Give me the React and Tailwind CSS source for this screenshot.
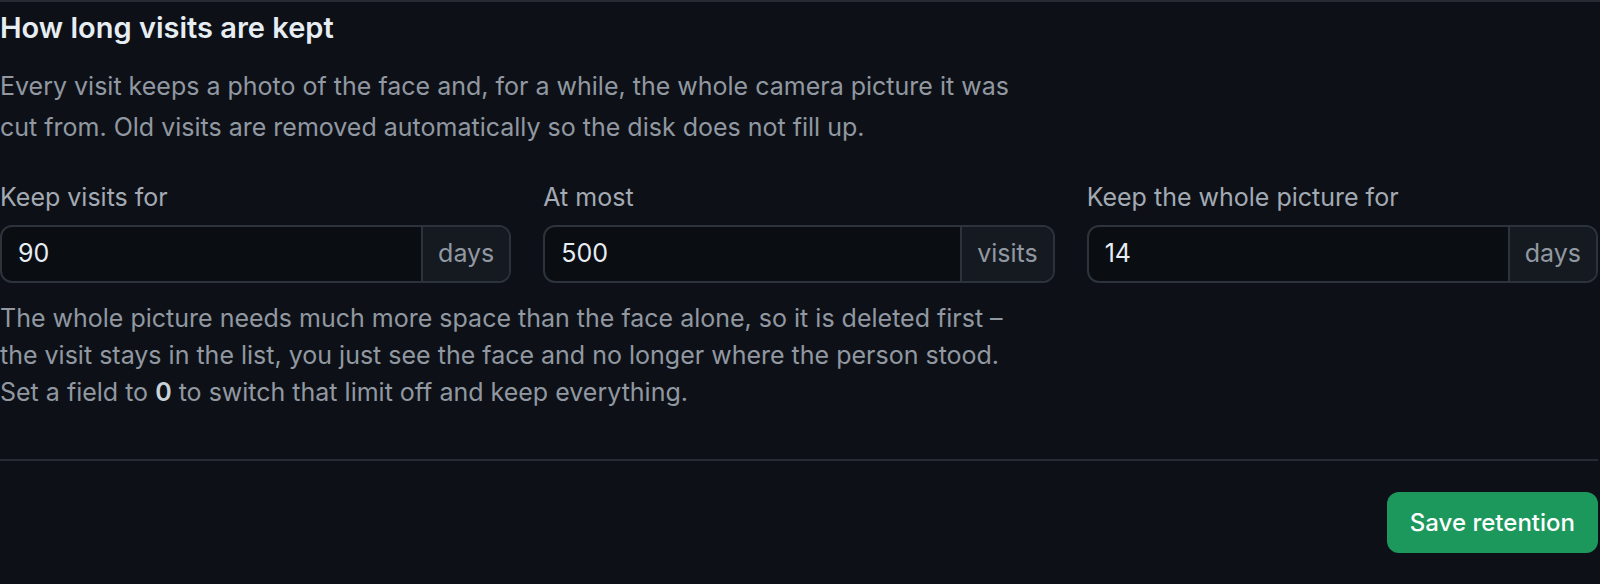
import React, { useState } from 'react';

const fields = [
    { id: 'days', label: 'Keep visits for', value: '90', unit: 'days' },
    { id: 'max', label: 'At most', value: '500', unit: 'visits' },
    { id: 'full', label: 'Keep the whole picture for', value: '14', unit: 'days' },
];

const RetentionField = ({ label, value, unit, onChange }) => (
    <label className="flex flex-col">
        <span className="text-[25px] leading-[32px] text-[#a3aab3] mb-[12px]">{label}</span>
        <div className="flex h-[58px] rounded-[12px] border-2 border-[#2d333b] overflow-hidden bg-[#0a0e13]">
            <input
                type="text"
                value={value}
                onChange={(e) => onChange(e.target.value)}
                className="flex-1 min-w-0 bg-transparent px-[16px] text-[25px] text-[#e6edf3] outline-none"
            />
            <span className="flex items-center px-[15px] border-l-2 border-[#2d333b] bg-[#151a21] text-[25px] text-[#9198a1]">
                {unit}
            </span>
        </div>
    </label>
);

const App = () => {
    const [values, setValues] = useState(
        Object.fromEntries(fields.map((f) => [f.id, f.value]))
    );

    return (
        <div className="min-h-screen bg-[#0d1117] font-['Inter','Noto_Sans',sans-serif] antialiased">
            <section className="border-t-2 border-[#262b33] pr-[2px]">
                {/* Heading */}
                <h2 className="pt-[8px] text-[29px] leading-[36px] font-semibold text-[#e6edf3]">
                    How long visits are kept
                </h2>
                <p className="mt-[20px] text-[25px] leading-[41px] text-[#9198a1]">
                    Every visit keeps a photo of the face and, for a while, the whole camera picture it was
                    <br />
                    cut from. Old visits are removed automatically so the disk does not fill up.
                </p>

                {/* Limits */}
                <div className="grid grid-cols-3 gap-8 mt-[33px]">
                    {fields.map((f) => (
                        <RetentionField
                            key={f.id}
                            label={f.label}
                            value={values[f.id]}
                            unit={f.unit}
                            onChange={(v) => setValues({ ...values, [f.id]: v })}
                        />
                    ))}
                </div>

                <p className="mt-[17px] text-[25px] leading-[37px] text-[#9198a1]">
                    The whole picture needs much more space than the face alone, so it is deleted first –
                    <br />
                    the visit stays in the list, you just see the face and no longer where the person stood.
                    <br />
                    Set a field to <strong className="font-semibold text-[#c9d1d9]">0</strong> to switch that limit off and keep everything.
                </p>

                {/* Footer */}
                <div className="mt-[48px] border-t-2 border-[#262b33] pt-[31px] flex justify-end">
                    <button className="h-[61px] px-[23px] rounded-[12px] bg-[#1d985c] text-[24px] font-medium text-white">
                        Save retention
                    </button>
                </div>
            </section>
        </div>
    );
};

export default App;
